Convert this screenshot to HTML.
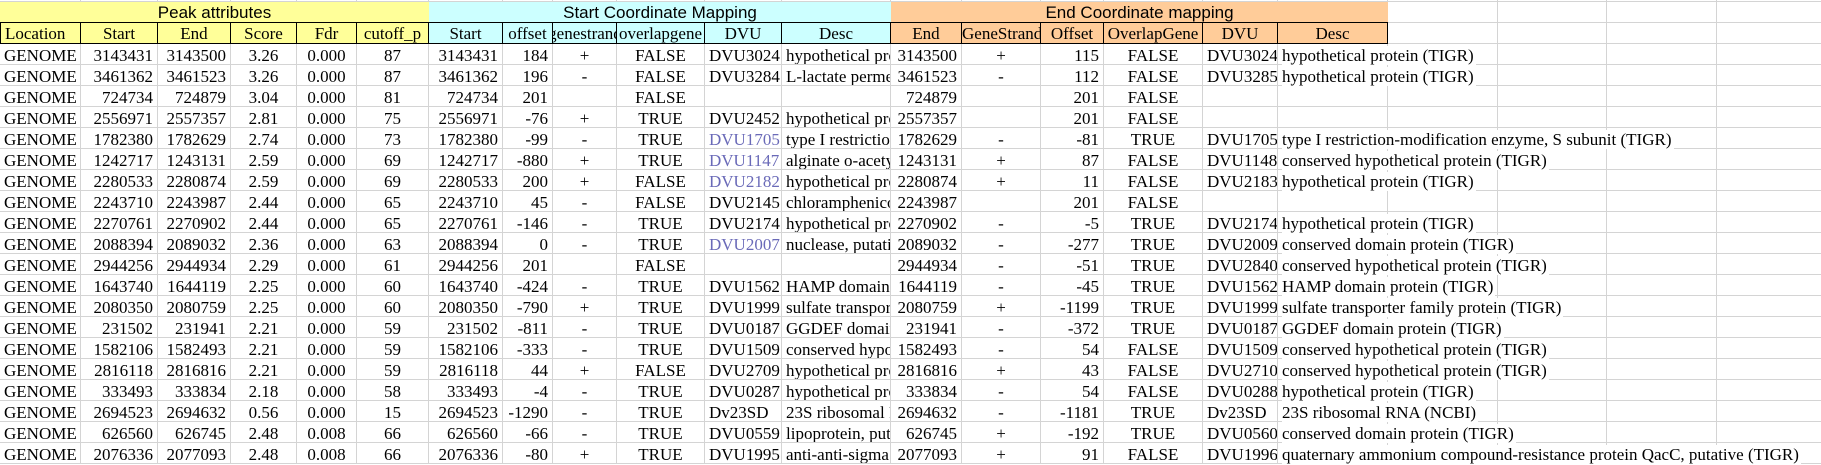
<!DOCTYPE html>
<html><head><meta charset="utf-8"><style>
*{margin:0;padding:0;box-sizing:border-box}
body{width:1821px;height:465px;overflow:hidden;background:#fff;font-family:"Liberation Serif",serif;font-size:17px;color:#000}
.g{display:grid;grid-template-columns:81px 77px 73px 66px 60px 72px 74px 50px 64px 88px 77px 109px 71px 79px 63px 99px 75px 110px 110px 109px 110px 110px;width:1900px}
.top{grid-template-rows:2px 21px 21px}
.top>div{border-right:1px solid #d4d4d4;border-bottom:1px solid #d4d4d4;overflow:hidden;white-space:nowrap}
.t{font-family:"Liberation Sans",sans-serif;font-size:17px;text-align:center;line-height:21px;border-right:none!important;border-bottom:1px solid #000!important}
.y{background:#ffff99}.cy{background:#ccffff}.o{background:#ffcc99}
.h{border-right:1px solid #000!important;border-bottom:1px solid #000!important;text-align:center;line-height:19px;padding-top:1px}
.h.l{text-align:left;padding-left:4px;border-left:1px solid #000}
.d{grid-auto-rows:21px}
.d>div{border-right:1px solid #d4d4d4;border-bottom:1px solid #d4d4d4;white-space:nowrap;overflow:hidden;line-height:19px;padding:2px 4px 0 4px}
.d>div:nth-child(22n+1),.d>div:nth-child(22n+11),.d>div:nth-child(22n+12),.d>div:nth-child(22n+17),.d>div:nth-child(22n+18){text-align:left}
.d>div:nth-child(22n+2),.d>div:nth-child(22n+3),.d>div:nth-child(22n+7),.d>div:nth-child(22n+8),.d>div:nth-child(22n+13),.d>div:nth-child(22n+15){text-align:right}
.d>div:nth-child(22n+4),.d>div:nth-child(22n+5),.d>div:nth-child(22n+6),.d>div:nth-child(22n+9),.d>div:nth-child(22n+10),.d>div:nth-child(22n+14),.d>div:nth-child(22n+16){text-align:center}
.d>div:nth-child(22n+18){overflow:visible}
.d>div:nth-child(22n+18) span{position:relative;z-index:2;background:#fff;display:inline-block;height:19px;padding-right:2px}
.u{color:#6a6ab8;font-weight:normal}
</style></head><body>
<div class="g top">
<div></div><div></div><div></div><div></div><div></div><div></div><div></div><div></div><div></div><div></div><div></div><div></div><div></div><div></div><div></div><div></div><div></div><div></div><div></div><div></div><div></div><div></div>
<div class="t y" style="grid-column:1/7">Peak attributes</div>
<div class="t cy" style="grid-column:7/13">Start Coordinate Mapping</div>
<div class="t o" style="grid-column:13/19">End Coordinate mapping</div>
<div></div><div></div><div></div><div></div>
<div class="h l y">Location</div><div class="h y">Start</div><div class="h y">End</div><div class="h y">Score</div><div class="h y">Fdr</div><div class="h y">cutoff_p</div>
<div class="h cy">Start</div><div class="h cy">offset</div><div class="h cy"><div style="margin-left:-11px;width:86px;text-align:center">genestrand</div></div><div class="h cy">overlapgene</div><div class="h cy">DVU</div><div class="h cy">Desc</div>
<div class="h o">End</div><div class="h o">GeneStrand</div><div class="h o">Offset</div><div class="h o">OverlapGene</div><div class="h o">DVU</div><div class="h o">Desc</div>
<div></div><div></div><div></div><div></div>
</div>
<div class="g d">
<div>GENOME</div><div>3143431</div><div>3143500</div><div>3.26</div><div>0.000</div><div>87</div><div>3143431</div><div>184</div><div>+</div><div>FALSE</div><div>DVU3024</div><div>hypothetical protein (TIGR)</div><div>3143500</div><div>+</div><div>115</div><div>FALSE</div><div>DVU3024</div><div><span>hypothetical protein (TIGR)</span></div><div></div><div></div><div></div><div></div>
<div>GENOME</div><div>3461362</div><div>3461523</div><div>3.26</div><div>0.000</div><div>87</div><div>3461362</div><div>196</div><div>-</div><div>FALSE</div><div>DVU3284</div><div>L-lactate permease</div><div>3461523</div><div>-</div><div>112</div><div>FALSE</div><div>DVU3285</div><div><span>hypothetical protein (TIGR)</span></div><div></div><div></div><div></div><div></div>
<div>GENOME</div><div>724734</div><div>724879</div><div>3.04</div><div>0.000</div><div>81</div><div>724734</div><div>201</div><div></div><div>FALSE</div><div></div><div></div><div>724879</div><div></div><div>201</div><div>FALSE</div><div></div><div></div><div></div><div></div><div></div><div></div>
<div>GENOME</div><div>2556971</div><div>2557357</div><div>2.81</div><div>0.000</div><div>75</div><div>2556971</div><div>-76</div><div>+</div><div>TRUE</div><div>DVU2452</div><div>hypothetical protein (TIGR)</div><div>2557357</div><div></div><div>201</div><div>FALSE</div><div></div><div></div><div></div><div></div><div></div><div></div>
<div>GENOME</div><div>1782380</div><div>1782629</div><div>2.74</div><div>0.000</div><div>73</div><div>1782380</div><div>-99</div><div>-</div><div>TRUE</div><div class="u">DVU1705</div><div>type I restriction-modification</div><div>1782629</div><div>-</div><div>-81</div><div>TRUE</div><div>DVU1705</div><div><span>type I restriction-modification enzyme, S subunit (TIGR)</span></div><div></div><div></div><div></div><div></div>
<div>GENOME</div><div>1242717</div><div>1243131</div><div>2.59</div><div>0.000</div><div>69</div><div>1242717</div><div>-880</div><div>+</div><div>TRUE</div><div class="u">DVU1147</div><div>alginate o-acetyltransferase</div><div>1243131</div><div>+</div><div>87</div><div>FALSE</div><div>DVU1148</div><div><span>conserved hypothetical protein (TIGR)</span></div><div></div><div></div><div></div><div></div>
<div>GENOME</div><div>2280533</div><div>2280874</div><div>2.59</div><div>0.000</div><div>69</div><div>2280533</div><div>200</div><div>+</div><div>FALSE</div><div class="u">DVU2182</div><div>hypothetical protein (TIGR)</div><div>2280874</div><div>+</div><div>11</div><div>FALSE</div><div>DVU2183</div><div><span>hypothetical protein (TIGR)</span></div><div></div><div></div><div></div><div></div>
<div>GENOME</div><div>2243710</div><div>2243987</div><div>2.44</div><div>0.000</div><div>65</div><div>2243710</div><div>45</div><div>-</div><div>FALSE</div><div>DVU2145</div><div>chloramphenicol</div><div>2243987</div><div></div><div>201</div><div>FALSE</div><div></div><div></div><div></div><div></div><div></div><div></div>
<div>GENOME</div><div>2270761</div><div>2270902</div><div>2.44</div><div>0.000</div><div>65</div><div>2270761</div><div>-146</div><div>-</div><div>TRUE</div><div>DVU2174</div><div>hypothetical protein (TIGR)</div><div>2270902</div><div>-</div><div>-5</div><div>TRUE</div><div>DVU2174</div><div><span>hypothetical protein (TIGR)</span></div><div></div><div></div><div></div><div></div>
<div>GENOME</div><div>2088394</div><div>2089032</div><div>2.36</div><div>0.000</div><div>63</div><div>2088394</div><div>0</div><div>-</div><div>TRUE</div><div class="u">DVU2007</div><div>nuclease, putative</div><div>2089032</div><div>-</div><div>-277</div><div>TRUE</div><div>DVU2009</div><div><span>conserved domain protein (TIGR)</span></div><div></div><div></div><div></div><div></div>
<div>GENOME</div><div>2944256</div><div>2944934</div><div>2.29</div><div>0.000</div><div>61</div><div>2944256</div><div>201</div><div></div><div>FALSE</div><div></div><div></div><div>2944934</div><div>-</div><div>-51</div><div>TRUE</div><div>DVU2840</div><div><span>conserved hypothetical protein (TIGR)</span></div><div></div><div></div><div></div><div></div>
<div>GENOME</div><div>1643740</div><div>1644119</div><div>2.25</div><div>0.000</div><div>60</div><div>1643740</div><div>-424</div><div>-</div><div>TRUE</div><div>DVU1562</div><div>HAMP domain protein</div><div>1644119</div><div>-</div><div>-45</div><div>TRUE</div><div>DVU1562</div><div><span>HAMP domain protein (TIGR)</span></div><div></div><div></div><div></div><div></div>
<div>GENOME</div><div>2080350</div><div>2080759</div><div>2.25</div><div>0.000</div><div>60</div><div>2080350</div><div>-790</div><div>+</div><div>TRUE</div><div>DVU1999</div><div>sulfate transporter</div><div>2080759</div><div>+</div><div>-1199</div><div>TRUE</div><div>DVU1999</div><div><span>sulfate transporter family protein (TIGR)</span></div><div></div><div></div><div></div><div></div>
<div>GENOME</div><div>231502</div><div>231941</div><div>2.21</div><div>0.000</div><div>59</div><div>231502</div><div>-811</div><div>-</div><div>TRUE</div><div>DVU0187</div><div>GGDEF domain protein</div><div>231941</div><div>-</div><div>-372</div><div>TRUE</div><div>DVU0187</div><div><span>GGDEF domain protein (TIGR)</span></div><div></div><div></div><div></div><div></div>
<div>GENOME</div><div>1582106</div><div>1582493</div><div>2.21</div><div>0.000</div><div>59</div><div>1582106</div><div>-333</div><div>-</div><div>TRUE</div><div>DVU1509</div><div>conserved hypothetical</div><div>1582493</div><div>-</div><div>54</div><div>FALSE</div><div>DVU1509</div><div><span>conserved hypothetical protein (TIGR)</span></div><div></div><div></div><div></div><div></div>
<div>GENOME</div><div>2816118</div><div>2816816</div><div>2.21</div><div>0.000</div><div>59</div><div>2816118</div><div>44</div><div>+</div><div>FALSE</div><div>DVU2709</div><div>hypothetical protein (TIGR)</div><div>2816816</div><div>+</div><div>43</div><div>FALSE</div><div>DVU2710</div><div><span>conserved hypothetical protein (TIGR)</span></div><div></div><div></div><div></div><div></div>
<div>GENOME</div><div>333493</div><div>333834</div><div>2.18</div><div>0.000</div><div>58</div><div>333493</div><div>-4</div><div>-</div><div>TRUE</div><div>DVU0287</div><div>hypothetical protein (TIGR)</div><div>333834</div><div>-</div><div>54</div><div>FALSE</div><div>DVU0288</div><div><span>hypothetical protein (TIGR)</span></div><div></div><div></div><div></div><div></div>
<div>GENOME</div><div>2694523</div><div>2694632</div><div>0.56</div><div>0.000</div><div>15</div><div>2694523</div><div>-1290</div><div>-</div><div>TRUE</div><div>Dv23SD</div><div>23S ribosomal RNA</div><div>2694632</div><div>-</div><div>-1181</div><div>TRUE</div><div>Dv23SD</div><div><span>23S ribosomal RNA (NCBI)</span></div><div></div><div></div><div></div><div></div>
<div>GENOME</div><div>626560</div><div>626745</div><div>2.48</div><div>0.008</div><div>66</div><div>626560</div><div>-66</div><div>-</div><div>TRUE</div><div>DVU0559</div><div>lipoprotein, putative</div><div>626745</div><div>+</div><div>-192</div><div>TRUE</div><div>DVU0560</div><div><span>conserved domain protein (TIGR)</span></div><div></div><div></div><div></div><div></div>
<div>GENOME</div><div>2076336</div><div>2077093</div><div>2.48</div><div>0.008</div><div>66</div><div>2076336</div><div>-80</div><div>+</div><div>TRUE</div><div>DVU1995</div><div>anti-anti-sigma factor</div><div>2077093</div><div>+</div><div>91</div><div>FALSE</div><div>DVU1996</div><div><span>quaternary ammonium compound-resistance protein QacC, putative (TIGR)</span></div><div></div><div></div><div></div><div></div>
</div>
</body></html>
